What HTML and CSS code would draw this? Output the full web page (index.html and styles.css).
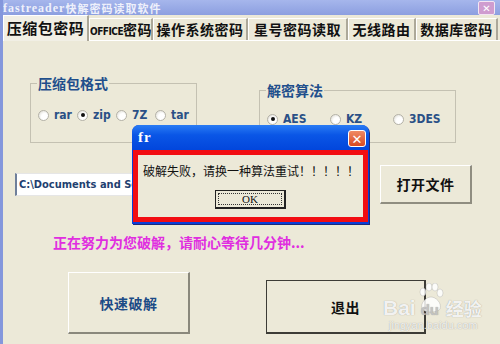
FILE: index.html
```html
<!DOCTYPE html>
<html lang="zh-CN">
<head>
    <meta charset="UTF-8">
    <title>fastreader快解密码读取软件</title>
    <link rel="stylesheet" href="styles.css">
</head>
<body>
    <div class="window">
        <div class="titlebar">
            <div class="title"><span class="title-en">fastreader</span><span class="title-cn">快解密码读取软件</span></div>
            <span class="title-close">✕</span>
        </div>

        <div class="tabs">
            <div class="tab tab-active w1">压缩包密码</div>
            <div class="tab w2"><span class="tab-en">OFFICE</span>密码</div>
            <div class="tab w3">操作系统密码</div>
            <div class="tab w4">星号密码读取</div>
            <div class="tab w5">无线路由</div>
            <div class="tab w6">数据库密码</div>
        </div>

        <div class="panel">
            <div class="group-row">
                <fieldset class="group group-format">
                    <legend>压缩包格式</legend>
                    <div class="options">
                        <label class="opt opt-short"><span class="radio"></span>rar</label>
                        <label class="opt opt-short"><span class="radio checked"></span>zip</label>
                        <label class="opt opt-short"><span class="radio"></span>7Z</label>
                        <label class="opt opt-short"><span class="radio"></span>tar</label>
                    </div>
                </fieldset>
                <fieldset class="group group-algo">
                    <legend>解密算法</legend>
                    <div class="options">
                        <label class="opt opt-long"><span class="radio checked"></span>AES</label>
                        <label class="opt opt-long"><span class="radio"></span>KZ</label>
                        <label class="opt opt-long"><span class="radio"></span>3DES</label>
                    </div>
                </fieldset>
            </div>

            <div class="file-row">
                <div class="path-field">C:\Documents and Settings\Administrator\桌面\test.rar</div>
                <button class="btn btn-open">打开文件</button>
            </div>

            <div class="status">正在努力为您破解，请耐心等待几分钟...</div>

            <div class="action-row">
                <button class="btn btn-crack">快速破解</button>
                <button class="btn btn-exit">退出</button>
            </div>
        </div>

        <!-- 弹出的提示框 -->
        <div class="dialog">
            <div class="dialog-title">
                <span class="dialog-name">fr</span>
                <span class="dialog-close">✕</span>
            </div>
            <div class="dialog-body">
                <div class="dialog-msg">破解失败，请换一种算法重试！！！！！</div>
                <div class="dialog-actions">
                    <button class="btn-ok"><span class="ok-focus">OK</span></button>
                </div>
            </div>
        </div>

        <div class="watermark">
            <div class="wm-logo">
                <span class="wm-bai">Bai</span>
                <span class="wm-du">
                    <svg class="wm-paw" width="26" height="30" viewBox="0 0 26 30">
                        <ellipse cx="5" cy="9" rx="3" ry="4" />
                        <ellipse cx="11" cy="4" rx="3" ry="4" />
                        <ellipse cx="17" cy="4" rx="3" ry="4" />
                        <ellipse cx="22" cy="10" rx="3" ry="4" />
                        <path d="M4 26 C2 20 8 14 13 14 C18 14 24 20 22 26 C20 30 6 30 4 26 Z" />
                    </svg>
                    <span class="wm-du-text">du</span>
                </span>
                <span class="wm-cn">经验</span>
            </div>
            <div class="wm-url">jingyan.baidu.com</div>
        </div>
    </div>
</body>
</html>
```

FILE: styles.css
```css
body {
    margin: 0;
    font-family: "Noto Sans CJK SC", "DejaVu Sans", sans-serif;
    background-color: #ece9d8;
}
.window {
    width: 500px;
    height: 344px;
    background-color: #ece9d8; /* XP 的窗口底色 */
    border-left: 3px solid #8497dc;
    box-sizing: border-box;
    position: relative;
    overflow: hidden;
}

/* 标题栏 */
.titlebar {
    height: 15px;
    background: linear-gradient(#a6b6ec, #8c9fe0);
    display: flex;
    align-items: center;
    justify-content: space-between;
    padding: 0 5px 0 0;
}
.title {
    display: flex;
    align-items: center;
    height: 15px;
    font-weight: bold;
    color: #eef0fb;
    white-space: nowrap;
}
.title-en {
    font-family: "Liberation Serif", serif;
    font-size: 12px;
    line-height: 14px;
    letter-spacing: 1px;
}
.title-cn {
    font-size: 11px;
    line-height: 14px;
    letter-spacing: 1px;
}
.title-close {
    width: 15px;
    height: 12px;
    background-color: #cf9ccf;
    border: 1px solid #f3e6f3;
    border-radius: 2px;
    color: #ffffff;
    font-size: 10px;
    line-height: 12px;
    text-align: center;
    font-weight: bold;
}

/* 选项卡 */
.tabs {
    height: 25px;
    display: flex;
    align-items: flex-end;
    border-bottom: 1px solid #ffffff;
}
.tab {
    height: 22px;
    box-sizing: border-box;
    border-left: 1px solid #ffffff;
    border-top: 1px solid #ffffff;
    border-right: 2px solid #aca899;
    font-size: 14px;
    font-weight: bold;
    line-height: 20px;
    letter-spacing: 0.5px;
    color: #111111;
    text-align: center;
    white-space: nowrap;
    overflow: hidden;
}
.tab-active {
    height: 26px;
    margin-bottom: -1px;
    background-color: #f1efe5;
    line-height: 24px;
    font-size: 15px;
}
.tab-en {
    font-family: "DejaVu Sans Condensed", "DejaVu Sans", sans-serif;
    font-size: 10px;
    letter-spacing: -0.5px;
}
.w1 { width: 86px; }
.w2 { width: 64px; }
.w3 { width: 95px; }
.w4 { width: 100px; }
.w5 { width: 68px; }
.w6 { width: 82px; }

/* 主面板 */
.panel {
    display: flex;
    flex-direction: column;
}
.group-row {
    display: flex;
    align-items: flex-start;
    margin-top: 35px;
}
.group {
    margin: 0;
    padding: 0 0 0 6px;
    border: 1px solid #c4c1b2;
    box-sizing: border-box;
    min-width: 0;
}
.group legend {
    padding: 0 1px;
    font-size: 14px;
    line-height: 14px;
    font-weight: bold;
    color: #1f4f8c;
}
.group-format {
    margin-left: 27px;
    width: 167px;
    height: 67px;
}
.group-algo {
    margin-left: 62px;
    margin-top: 7px;
    width: 197px;
    height: 60px;
}
.options {
    display: flex;
    align-items: center;
    height: 14px;
}
.group-format .options {
    margin-top: 18px;
}
.group-algo .options {
    margin-top: 15px;
}
.opt {
    display: flex;
    align-items: center;
    font-family: "DejaVu Sans Condensed", "DejaVu Sans", sans-serif;
    font-size: 12px;
    font-weight: bold;
    color: #2a5086;
}
.opt-short { width: 39px; }
.opt-long { width: 63px; }
.radio {
    width: 11px;
    height: 11px;
    margin: 0 5px 0 1px;
    border-radius: 50%;
    border: 1px solid #b4b2a8;
    background: radial-gradient(circle at 65% 65%, #ffffff 40%, #d8d6cc);
    box-sizing: border-box;
    display: flex;
    align-items: center;
    justify-content: center;
}
.radio.checked::after {
    content: "";
    width: 4px;
    height: 4px;
    border-radius: 50%;
    background-color: #111111;
}

/* 文件路径 */
.file-row {
    display: flex;
    align-items: center;
    height: 39px;
    margin-top: 22px;
}
.path-field {
    margin-left: 12px;
    width: 330px;
    height: 23px;
    box-sizing: border-box;
    background-color: #ffffff;
    border: 1px solid #e6e6e6;
    border-left: 2px solid #6f7f9a;
    padding-left: 2px;
    font-family: "DejaVu Sans Condensed", "DejaVu Sans", sans-serif;
    font-size: 11px;
    font-weight: bold;
    line-height: 21px;
    color: #1f3f70;
    white-space: nowrap;
    overflow: hidden;
}
.btn {
    font-family: "Noto Sans CJK SC", sans-serif;
    background-color: #ece9d8;
    box-sizing: border-box;
    padding: 0;
    font-weight: bold;
    letter-spacing: 0.5px;
}
.btn-open {
    margin-left: 35px;
    width: 92px;
    height: 39px;
    border: 1px solid #ffffff;
    border-right: 2px solid #8f8d80;
    border-bottom: 2px solid #8f8d80;
    font-size: 14px;
    color: #111111;
}

/* 状态文字 */
.status {
    margin: 31px 0 0 50px;
    font-size: 14px;
    line-height: 15px;
    font-weight: bold;
    color: #e02ee0;
    white-space: nowrap;
}

/* 底部按钮 */
.action-row {
    display: flex;
    align-items: flex-end;
    margin-top: 22px;
}
.btn-crack {
    margin-left: 65px;
    width: 122px;
    height: 62px;
    border: 1px solid #ffffff;
    border-right: 2px solid #8a887c;
    border-bottom: 2px solid #8a887c;
    font-size: 14px;
    color: #1c4b86;
}
.btn-exit {
    margin-left: 76px;
    width: 160px;
    height: 54px;
    border: 1px solid #3d3c36;
    border-right: 2px solid #3d3c36;
    border-bottom: 2px solid #3d3c36;
    font-size: 14px;
    color: #111111;
}

/* 提示框 */
.dialog {
    position: absolute;
    left: 129px;
    top: 125px;
    width: 237px;
    height: 99px;
    background-color: #0a3fd8;
    border-radius: 7px 7px 0 0;
    display: flex;
    flex-direction: column;
    box-shadow: 1px 1px 0 #1d2a7a;
}
.dialog-title {
    height: 25px;
    background: linear-gradient(#2a7cf4, #0a56e6 40%, #0246dc);
    border-radius: 7px 7px 0 0;
    display: flex;
    align-items: center;
    justify-content: space-between;
    padding: 0 3px 0 6px;
}
.dialog-name {
    font-family: "Liberation Serif", serif;
    font-size: 15px;
    font-weight: bold;
    color: #ffffff;
    letter-spacing: 1px;
}
.dialog-close {
    width: 18px;
    height: 17px;
    margin-top: 2px;
    box-sizing: border-box;
    background: linear-gradient(#f08a64, #d84a22);
    border: 1px solid #ffffff;
    border-radius: 3px;
    color: #ffffff;
    font-size: 13px;
    line-height: 15px;
    text-align: center;
    font-weight: bold;
}
.dialog-body {
    flex: 1;
    margin: 0 1px 2px 1px;
    background-color: #ece9d8;
    border: 5px solid #f20d12; /* 截图里的红色标注框 */
    display: flex;
    flex-direction: column;
}
.dialog-msg {
    margin: 9px 0 0 5px;
    font-size: 12px;
    line-height: 14px;
    color: #111111;
    white-space: nowrap;
}
.dialog-actions {
    display: flex;
    justify-content: center;
    margin-top: 12px;
}
.btn-ok {
    width: 71px;
    height: 19px;
    padding: 2px;
    box-sizing: border-box;
    background-color: #ece9d8;
    border: 1px solid #222222;
    border-right: 2px solid #222222;
    border-bottom: 2px solid #222222;
    display: flex;
}
.ok-focus {
    flex: 1;
    border: 1px dotted #333333;
    font-family: "Liberation Serif", serif;
    font-size: 11px;
    line-height: 11px;
    color: #111111;
    text-align: center;
}

/* 百度经验水印 */
.watermark {
    position: absolute;
    left: 380px;
    top: 283px;
    color: rgba(255, 255, 255, 0.9);
    text-shadow: 0 0 1px rgba(90, 90, 90, 0.6);
}
.wm-logo {
    display: flex;
    align-items: flex-end;
    height: 36px;
}
.wm-bai {
    font-family: "Liberation Sans", sans-serif;
    font-size: 21px;
    font-weight: bold;
    line-height: 22px;
}
.wm-du {
    position: relative;
    width: 26px;
    height: 36px;
    margin: 0 2px;
}
.wm-paw {
    position: absolute;
    left: 0;
    top: 0;
    fill: rgba(255, 255, 255, 0.85);
    stroke: rgba(120, 120, 120, 0.4);
    stroke-width: 0.6;
}
.wm-du-text {
    position: absolute;
    left: 3px;
    bottom: 1px;
    font-family: "Liberation Sans", sans-serif;
    font-size: 15px;
    font-weight: bold;
    color: rgba(200, 200, 200, 0.9);
}
.wm-cn {
    font-size: 18px;
    line-height: 22px;
    font-weight: bold;
}
.wm-url {
    font-family: "Liberation Sans", sans-serif;
    font-size: 11px;
    line-height: 12px;
    margin-left: 6px;
    color: rgba(255, 255, 255, 0.85);
}
```
